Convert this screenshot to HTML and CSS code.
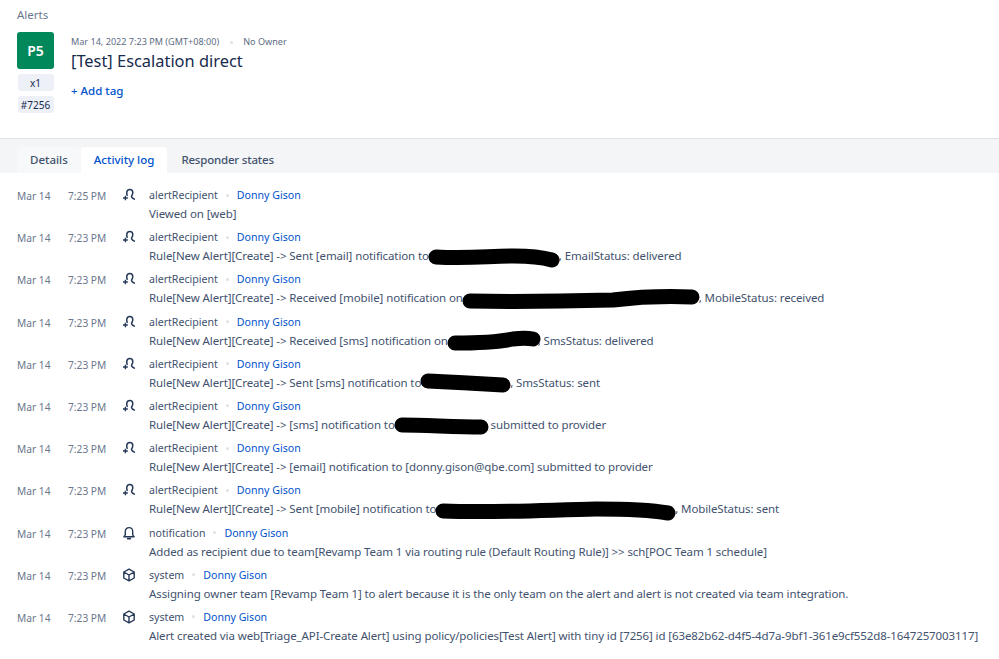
FILE: index.html
```html
<!DOCTYPE html>
<html lang="en">
<head>
<meta charset="utf-8">
<title>Alert</title>
<link rel="stylesheet" href="styles.css">
</head>
<body>
<svg class="defs" width="0" height="0" aria-hidden="true">
  <symbol id="i-recipient" viewBox="0 0 14 14"><path d="M5.2 7.4C4.7 6.2 4.6 5.2 4.8 4.2C5.1 2.6 6.3 1.6 7.8 1.6C9.6 1.6 10.8 3 10.8 4.8C10.8 6.2 10.2 7.2 9.6 8C9.3 8.8 10 10 12.4 11.2" fill="none" stroke="currentColor" stroke-width="1.5" stroke-linecap="round"/><path d="M1 10H5.8M3.4 7.8v4.4" fill="none" stroke="currentColor" stroke-width="1.4"/></symbol>
  <symbol id="i-bell" viewBox="0 0 14 14"><path d="M1.8 10.8h10.4l-1.5-2V5.6C10.7 3.4 9.2 1.6 7 1.6S3.3 3.4 3.3 5.6v3.2z" fill="none" stroke="currentColor" stroke-width="1.4" stroke-linejoin="round"/><path d="M5.6 12.6h2.8" stroke="currentColor" stroke-width="1.6" stroke-linecap="round"/></symbol>
  <symbol id="i-box" viewBox="0 0 14 14"><path d="M7 1.2 12.2 4v6L7 12.8 1.8 10V4zM1.8 4 7 7l5.2-3M7 7v5.8" fill="none" stroke="currentColor" stroke-width="1.4" stroke-linejoin="round"/></symbol>
</svg>
<header class="head">
  <div class="crumb">Alerts</div>
  <div class="summary">
    <div class="badges">
      <div class="priority">P5</div>
      <div class="chip">x1</div>
      <div class="chip">#7256</div>
    </div>
    <div class="info">
      <div class="meta"><span>Mar 14, 2022 7:23 PM (GMT+08:00)</span><span class="dot"></span><span>No Owner</span></div>
      <h1 class="title">[Test] Escalation direct</h1>
      <a class="tag" href="#">+ Add tag</a>
    </div>
  </div>
</header>
<nav class="tabs">
  <a class="tab" href="#">Details</a>
  <a class="tab active" href="#">Activity log</a>
  <a class="tab" href="#">Responder states</a>
</nav>
<main class="log">
  <div class="row"><span class="date">Mar 14</span><span class="time">7:25 PM</span><svg class="icon"><use href="#i-recipient"/></svg><div class="body"><div class="who"><b>alertRecipient</b><span class="dot"></span><a href="#">Donny Gison</a></div><div class="msg">Viewed on [web]</div></div></div>
  <div class="row"><span class="date">Mar 14</span><span class="time">7:23 PM</span><svg class="icon"><use href="#i-recipient"/></svg><div class="body"><div class="who"><b>alertRecipient</b><span class="dot"></span><a href="#">Donny Gison</a></div><div class="msg">Rule[New Alert][Create] -&gt; Sent [email] notification to <span class="redact r1"><svg viewBox="0 0 130 20"><path d="M7 10C40 12 60 9 85 9C100 9 112 10 123 13"/></svg></span>, EmailStatus: delivered</div></div></div>
  <div class="row"><span class="date">Mar 14</span><span class="time">7:23 PM</span><svg class="icon"><use href="#i-recipient"/></svg><div class="body"><div class="who"><b>alertRecipient</b><span class="dot"></span><a href="#">Donny Gison</a></div><div class="msg">Rule[New Alert][Create] -&gt; Received [mobile] notification on <span class="redact r2"><svg viewBox="0 0 236 20"><path d="M7 12C60 13 110 12 150 11C175 8 205 7 229 8"/></svg></span>, MobileStatus: received</div></div></div>
  <div class="row"><span class="date">Mar 14</span><span class="time">7:23 PM</span><svg class="icon"><use href="#i-recipient"/></svg><div class="body"><div class="who"><b>alertRecipient</b><span class="dot"></span><a href="#">Donny Gison</a></div><div class="msg">Rule[New Alert][Create] -&gt; Received [sms] notification on <span class="redact r3"><svg viewBox="0 0 96 20"><path d="M7 12C30 12 50 11 65 8C73 7 80 7 85 8"/></svg></span>, SmsStatus: delivered</div></div></div>
  <div class="row"><span class="date">Mar 14</span><span class="time">7:23 PM</span><svg class="icon"><use href="#i-recipient"/></svg><div class="body"><div class="who"><b>alertRecipient</b><span class="dot"></span><a href="#">Donny Gison</a></div><div class="msg">Rule[New Alert][Create] -&gt; Sent [sms] notification to <span class="redact r4"><svg viewBox="0 0 89 20"><path d="M7 7C30 8 60 10 82 11"/></svg></span>, SmsStatus: sent</div></div></div>
  <div class="row"><span class="date">Mar 14</span><span class="time">7:23 PM</span><svg class="icon"><use href="#i-recipient"/></svg><div class="body"><div class="who"><b>alertRecipient</b><span class="dot"></span><a href="#">Donny Gison</a></div><div class="msg">Rule[New Alert][Create] -&gt; [sms] notification to <span class="redact r5"><svg viewBox="0 0 93 20"><path d="M7 9C30 9 60 11 86 11"/></svg></span> submitted to provider</div></div></div>
  <div class="row"><span class="date">Mar 14</span><span class="time">7:23 PM</span><svg class="icon"><use href="#i-recipient"/></svg><div class="body"><div class="who"><b>alertRecipient</b><span class="dot"></span><a href="#">Donny Gison</a></div><div class="msg">Rule[New Alert][Create] -&gt; [email] notification to [donny.gison@qbe.com] submitted to provider</div></div></div>
  <div class="row"><span class="date">Mar 14</span><span class="time">7:23 PM</span><svg class="icon"><use href="#i-recipient"/></svg><div class="body"><div class="who"><b>alertRecipient</b><span class="dot"></span><a href="#">Donny Gison</a></div><div class="msg">Rule[New Alert][Create] -&gt; Sent [mobile] notification to <span class="redact r6"><svg viewBox="0 0 239 20"><path d="M7 11C60 13 110 10 160 9C190 9 215 10 232 13"/></svg></span>, MobileStatus: sent</div></div></div>
  <div class="row"><span class="date">Mar 14</span><span class="time">7:23 PM</span><svg class="icon"><use href="#i-bell"/></svg><div class="body"><div class="who"><b>notification</b><span class="dot"></span><a href="#">Donny Gison</a></div><div class="msg">Added as recipient due to team[Revamp Team 1 via routing rule (Default Routing Rule)] &gt;&gt; sch[POC Team 1 schedule]</div></div></div>
  <div class="row"><span class="date">Mar 14</span><span class="time">7:23 PM</span><svg class="icon"><use href="#i-box"/></svg><div class="body"><div class="who"><b>system</b><span class="dot"></span><a href="#">Donny Gison</a></div><div class="msg">Assigning owner team [Revamp Team 1] to alert because it is the only team on the alert and alert is not created via team integration.</div></div></div>
  <div class="row"><span class="date">Mar 14</span><span class="time">7:23 PM</span><svg class="icon"><use href="#i-box"/></svg><div class="body"><div class="who"><b>system</b><span class="dot"></span><a href="#">Donny Gison</a></div><div class="msg">Alert created via web[Triage_API-Create Alert] using policy/policies[Test Alert] with tiny id [7256] id [63e82b62-d4f5-4d7a-9bf1-361e9cf552d8-1647257003117]</div></div></div>
</main>
</body>
</html>
```
FILE: styles.css
```css
* { box-sizing: border-box; }
html, body { margin: 0; background: #fff; }
body { font-family: "Noto Sans", sans-serif; font-size: 11.5px; color: #42526e; overflow: hidden; height: 659px; }
a { text-decoration: none; color: #0052cc; }
.defs { position: absolute; }
.head { height: 138px; padding: 7px 17px 0; }
.crumb { color: #6b778c; font-size: 11.5px; line-height: 16px; }
.summary { display: flex; gap: 17px; margin-top: 9px; }
.badges { width: 37px; display: flex; flex-direction: column; align-items: center; }
.priority { width: 37px; height: 37px; border-radius: 3px; background: #00875a; color: #fff; font-weight: 600; font-size: 14px; display: flex; align-items: center; justify-content: center; }
.chip { width: 36px; height: 17px; margin-top: 5px; border-radius: 3px; background: #edf0f7; color: #172b4d; font-size: 10px; line-height: 19px; text-align: center; }
.info { padding-top: 4px; }
.meta { display: flex; align-items: center; font-size: 9.1px; line-height: 12px; color: #5e6c84; }
.dot { display: inline-block; width: 3px; height: 3px; border-radius: 50%; background: #dfe1e6; margin: 0 10.5px; }
.title { margin: 1px 0 0; font-weight: 400; font-size: 16.4px; line-height: 24px; color: #172b4d; }
.tag { display: block; margin-top: 10px; font-size: 11.5px; line-height: 16px; font-weight: 500; }
.tabs { height: 35px; background: #f4f5f7; border-top: 1px solid #dfe1e6; padding: 8px 0 0 17px; display: flex; }
.tab { padding: 0 13px; height: 26px; line-height: 26px; font-size: 11.5px; color: #42526e; border-radius: 3px 3px 0 0; background: #f7f8f9; font-weight: 500; }
.tab:last-child { background: transparent; letter-spacing: -.2px; margin-left: 1px; }
.tab.active { background: #fff; color: #0052cc; }
.log { padding-top: 13px; }
.row { display: grid; grid-template-columns: 51px 54px 27px 1fr; height: 42.2px; padding-left: 17px; }
.date, .time { color: #6b778c; font-size: 10.2px; line-height: 20px; }
.icon { width: 14px; height: 14px; color: #253858; margin-top: 2px; }
.who { display: flex; align-items: center; line-height: 18px; height: 18px; font-size: 10.6px; }
.who b { font-weight: 400; color: #42526e; }
.who a { color: #0052cc; }
.who .dot { margin: 0 8px; }
.msg { line-height: 19px; white-space: nowrap; font-size: 11.5px; letter-spacing: -.107px; }
.redact { display: inline-block; height: 14px; vertical-align: middle; position: relative; margin-left: -3px; }
.redact svg { position: absolute; left: 0; top: -3px; height: 20px; overflow: visible; }
.redact path { fill: none; stroke: #000; stroke-width: 15; stroke-linecap: round; }
.r1, .r1 svg { width: 130px; }
.r2, .r2 svg { width: 236px; }
.r3 { width: 90px; }
.r3 svg { width: 96px; }
.r4, .r4 svg { width: 89px; }
.r5, .r5 svg { width: 93px; }
.r6, .r6 svg { width: 239px; }
```
